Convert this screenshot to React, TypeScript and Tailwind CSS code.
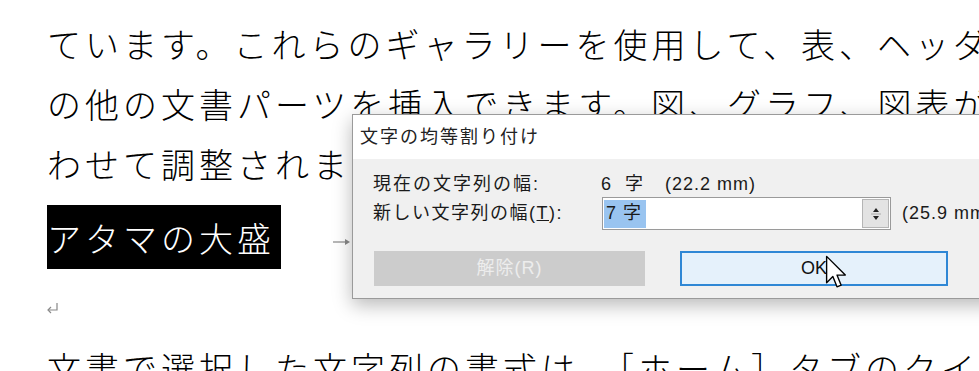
import React from 'react';

const doc = { fontFamily: '"Noto Sans CJK JP", sans-serif' };
const ui = { fontFamily: '"Liberation Sans", "Noto Sans CJK JP", sans-serif' };

const Line = ({ children }: { children: React.ReactNode }) => (
  <div className="h-[60px] flex items-center whitespace-nowrap">{children}</div>
);

const Cursor = () => (
  <svg className="absolute left-[825px] top-[255px]" width="24" height="36" viewBox="0 0 17 26">
    <path d="M1 1 L1 20 L5.5 15.5 L8.5 23 L11.5 21.8 L8.5 14.5 L14.5 14.5 Z" fill="#fff" stroke="#000" strokeWidth="1" strokeLinejoin="round" />
  </svg>
);

export default function App() {
  return (
    <div className="relative w-[979px] h-[371px] overflow-hidden bg-white">
      {/* document body */}
      <div className="pl-[47px] pt-[13px] text-[34px] font-light tracking-[4px] text-black" style={doc}>
        <Line>ています。これらのギャラリーを使用して、表、ヘッダー、フッター、リスト、表紙や、そ</Line>
        <Line>の他の文書パーツを挿入できます。図、グラフ、図表が</Line>
        <Line>わせて調整されます。</Line>
        <div className="mt-[12px] h-[64px] flex items-center">
          <div className="w-[234px] h-full bg-black text-white flex items-center whitespace-nowrap">アタマの大盛</div>
          <svg className="ml-[52px] mt-[10px]" width="18" height="8" viewBox="0 0 18 8">
            <path d="M0 4 H15" stroke="#888" strokeWidth="1.2" />
            <path d="M12 1 L17 4 L12 7 Z" fill="#888" />
          </svg>
        </div>
        <div className="h-[68px] pt-[10px] flex items-center">
          <svg width="12" height="12" viewBox="0 0 12 12">
            <path d="M10 1 V8 H2" stroke="#888" strokeWidth="1.2" fill="none" />
            <path d="M4 5 L1 8 L4 11" stroke="#888" strokeWidth="1.2" fill="none" />
          </svg>
        </div>
        <Line>文書で選択した文字列の書式は、［ホーム］タブのクイック</Line>
      </div>

      {/* dialog */}
      <div className="absolute left-[352px] top-[114px] w-[660px] h-[185px] border border-[#9a9a9a] bg-[#f0f0f0] shadow-[0_6px_18px_rgba(0,0,0,0.28)]" style={ui}>
        <div className="h-[44px] bg-white pl-[7px] flex items-center text-[18px] tracking-[2px] text-[#222]">
          文字の均等割り付け
        </div>
        <div className="pl-[20px] text-[18px] text-[#1a1a1a]">
          <div className="mt-[12px] h-[26px] flex items-center whitespace-nowrap">
            <div className="w-[228px] tracking-[2px]">現在の文字列の幅:</div>
            <span>6</span>
            <span className="ml-[14px]">字</span>
            <span className="ml-[22px] tracking-[1px]">(22.2 mm)</span>
          </div>
          <div className="h-[33px] flex items-center whitespace-nowrap">
            <div className="w-[229px] tracking-[1.5px]">
              新しい文字列の幅(<span className="underline">T</span>):
            </div>
            <div className="w-[289px] h-[33px] border border-[#9a9a9a] bg-white flex items-center pl-px">
              <span className="bg-[#99c4f0] h-[28px] w-[42px] flex items-center pl-[2px] tracking-[1px]">7 字</span>
              <div className="ml-auto mr-px w-[27px] h-[29px] border border-[#b5b5b5] bg-[#e3e3e3] flex flex-col items-center justify-center">
                <svg width="10" height="20" viewBox="0 0 10 20">
                  <path d="M2 8 L5 4 L8 8 Z" fill="#222" />
                  <path d="M0 10 H10" stroke="#aaa" strokeWidth="1" />
                  <path d="M2 12 L5 16 L8 12 Z" fill="#222" />
                </svg>
              </div>
            </div>
            <div className="ml-[11px] tracking-[1px]">(25.9 mm)</div>
          </div>
          <div className="mt-[21px] flex">
            <div className="ml-px w-[271px] h-[35px] bg-[#cccccc] flex items-center justify-center text-[#ededed] tracking-[1px]">
              解除(R)
            </div>
            <div className="ml-[35px] w-[268px] h-[35px] bg-[#e5f1fb] border-2 border-[#2f87d5] flex items-center justify-center text-[#111]">
              OK
            </div>
          </div>
        </div>
      </div>

      <Cursor />
    </div>
  );
}
